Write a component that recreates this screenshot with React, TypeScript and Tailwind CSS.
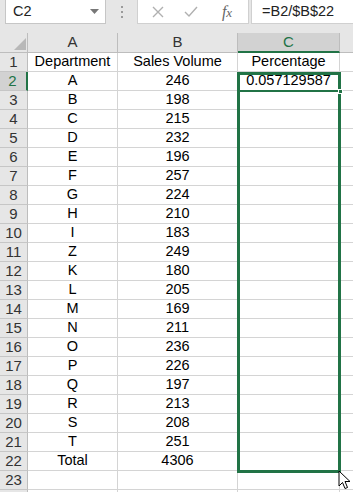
import React from "react";

const rows: [string, string, string][] = [
  ["Department", "Sales Volume", "Percentage"],
  ["A", "246", "0.057129587"],
  ["B", "198", ""],
  ["C", "215", ""],
  ["D", "232", ""],
  ["E", "196", ""],
  ["F", "257", ""],
  ["G", "224", ""],
  ["H", "210", ""],
  ["I", "183", ""],
  ["Z", "249", ""],
  ["K", "180", ""],
  ["L", "205", ""],
  ["M", "169", ""],
  ["N", "211", ""],
  ["O", "236", ""],
  ["P", "226", ""],
  ["Q", "197", ""],
  ["R", "213", ""],
  ["S", "208", ""],
  ["T", "251", ""],
  ["Total", "4306", ""],
  ["", "", ""],
  ["", "", ""],
];

export default function App() {
  return (
    <div
      className="w-[353px] h-[492px] overflow-hidden bg-white relative"
      style={{ fontFamily: '"Liberation Sans", Arial, sans-serif' }}
    >
      {/* Toolbar */}
      <div className="h-[33px] bg-[#e6e6e6] flex items-start">
        <div className="ml-[5px] w-[101px] h-[24px] bg-white border border-t-0 border-[#c6c6c6] flex items-center justify-between pl-[7px] pr-[6px]">
          <span className="text-[14.5px] text-[#222]">C2</span>
          <svg width="9" height="5" viewBox="0 0 9 5">
            <polygon points="0,0 9,0 4.5,5" fill="#777" />
          </svg>
        </div>
        <div className="w-[31px] h-[24px] flex flex-col items-center justify-center gap-[3px]">
          <div className="w-[2px] h-[2px] bg-[#9a9a9a]" />
          <div className="w-[2px] h-[2px] bg-[#9a9a9a]" />
          <div className="w-[2px] h-[2px] bg-[#9a9a9a]" />
        </div>
        <div className="w-[112px] h-[24px] bg-white border border-t-0 border-[#d0d0d0] flex items-center">
          <div className="w-[40px] flex justify-center">
            <svg width="12" height="12" viewBox="0 0 12 12">
              <path d="M1 1 L11 11 M11 1 L1 11" stroke="#b0b0b0" strokeWidth="1.4" />
            </svg>
          </div>
          <div className="w-[26px] flex justify-center">
            <svg width="14" height="12" viewBox="0 0 14 12">
              <path d="M1 6 L5 10 L13 1" stroke="#b0b0b0" strokeWidth="1.4" fill="none" />
            </svg>
          </div>
          <div className="w-[44px] flex justify-center pl-[2px]">
            <span
              className="text-[16px] text-[#666] italic leading-none"
              style={{ fontFamily: '"Liberation Serif", "Times New Roman", serif' }}
            >
              f<span className="text-[13px]">x</span>
            </span>
          </div>
        </div>
        <div className="ml-[2px] flex-1 h-[24px] bg-white border-l border-b border-[#d0d0d0] flex items-center pl-[10px]">
          <span className="text-[14.5px] text-[#222]">=B2/$B$22</span>
        </div>
      </div>

      {/* Grid */}
      <div className="relative">
        {/* Header row */}
        <div className="flex h-[20px] bg-[#e6e6e6] border-b border-[#bdbdbd]">
          <div className="w-[28px] shrink-0 border-r border-[#bdbdbd] relative">
            <svg className="absolute left-[14px] top-[5px]" width="12" height="12" viewBox="0 0 12 12">
              <polygon points="12,0 12,12 0,12" fill="#b8b8b8" />
            </svg>
          </div>
          <div className="w-[90px] shrink-0 border-r border-[#bdbdbd] flex items-center justify-center text-[15px] text-[#333]">A</div>
          <div className="w-[120px] shrink-0 border-r border-[#bdbdbd] flex items-center justify-center text-[15px] text-[#333]">B</div>
          <div className="w-[102px] shrink-0 border-r border-[#bdbdbd] bg-[#d2d2d2] border-b-2 border-b-[#217346] -mb-px flex items-center justify-center text-[15px] text-[#217346]">C</div>
          <div className="flex-1" />
        </div>
        {rows.map((r, i) => {
          const n = i + 1;
          const sel = n === 2;
          return (
            <div key={i} className="flex h-[19px]">
              <div
                className={
                  sel
                    ? "w-[28px] shrink-0 bg-[#d2d2d2] border-b border-[#c6c6c6] border-r-2 border-r-[#217346] flex items-center justify-center text-[15px] text-[#217346] pr-[1px]"
                    : "w-[28px] shrink-0 bg-[#e6e6e6] border-b border-r border-[#c6c6c6] border-r-[#bdbdbd] flex items-center justify-center text-[15px] text-[#333]"
                }
              >
                {n <= 23 ? n : ""}
              </div>
              <div className="w-[90px] shrink-0 border-r border-b border-[#d4d4d4] flex items-center justify-center text-[14.5px] text-black">{r[0]}</div>
              <div className="w-[120px] shrink-0 border-r border-b border-[#d4d4d4] flex items-center justify-center text-[14.5px] text-black">{r[1]}</div>
              <div className="w-[102px] shrink-0 border-r border-b border-[#d4d4d4] flex items-center justify-center text-[14.5px] text-black">{r[2]}</div>
              <div className="flex-1 border-b border-[#d4d4d4]" />
            </div>
          );
        })}

        {/* Selection overlay */}
        <div className="absolute left-[237px] top-[39px] w-[104px] h-[401px] border-[3px] border-[#217346] pointer-events-none" />
        <div className="absolute left-[237px] top-[57px] w-[104px] h-[2px] bg-[#217346]" />
        <div className="absolute left-[338px] top-[56px] w-[5px] h-[5px] bg-[#217346] border border-white" />

        {/* Cursor */}
        <svg className="absolute left-[338px] top-[437px]" width="14" height="20" viewBox="0 0 14 20">
          <path d="M1 1 L1 16 L4.5 12.5 L7 18.5 L9.5 17.5 L7 11.5 L12 11.5 Z" fill="white" stroke="black" strokeWidth="1" strokeLinejoin="round" />
        </svg>
      </div>
    </div>
  );
}
